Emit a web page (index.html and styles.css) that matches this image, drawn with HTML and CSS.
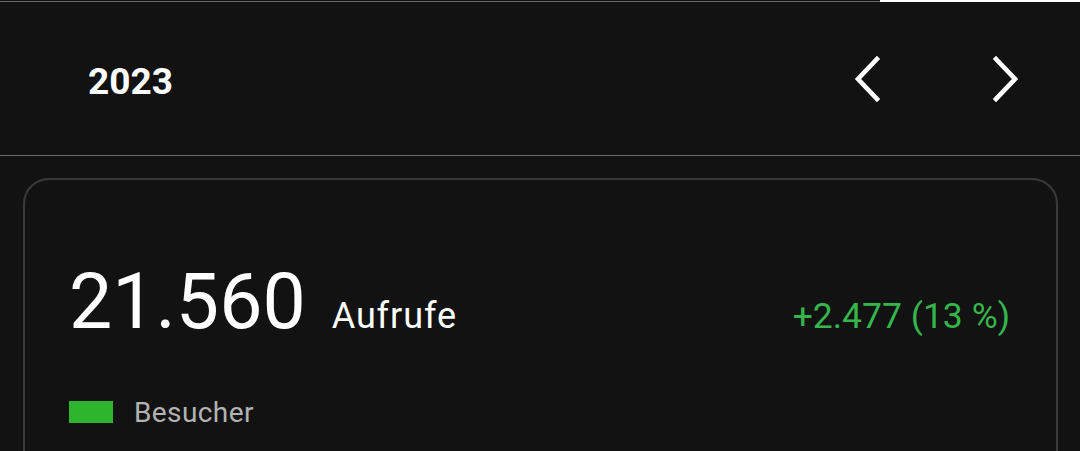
FILE: index.html
```html
<!DOCTYPE html>
<html lang="de">
<head>
<meta charset="utf-8">
<title>Statistik 2023</title>
<link rel="stylesheet" href="styles.css">
</head>
<body>
<div class="topbar">
  <div class="track"></div>
  <div class="indicator"></div>
</div>
<header class="header">
  <div class="year">2023</div>
  <div class="nav">
    <button class="navbtn" aria-label="Zurück">
      <svg width="26" height="46" viewBox="0 0 26 46"><polyline points="23,3 4,23 23,43" fill="none" stroke="#ffffff" stroke-width="4.6" stroke-linecap="square" stroke-linejoin="miter"/></svg>
    </button>
    <button class="navbtn" aria-label="Weiter">
      <svg width="26" height="46" viewBox="0 0 26 46"><polyline points="3,3 22,23 3,43" fill="none" stroke="#ffffff" stroke-width="4.6" stroke-linecap="square" stroke-linejoin="miter"/></svg>
    </button>
  </div>
</header>
<div class="divider"></div>
<section class="card">
  <div class="stat-row">
    <div class="stat-main">
      <span class="stat-value">21.560</span>
      <span class="stat-label">Aufrufe</span>
    </div>
    <span class="stat-delta">+2.477 (13 %)</span>
  </div>
  <div class="legend">
    <span class="legend-swatch"></span>
    <span class="legend-label">Besucher</span>
  </div>
</section>
</body>
</html>
```

FILE: styles.css
```css
html, body {
  margin: 0;
  padding: 0;
  background: #121212;
  height: 100%;
  overflow: hidden;
}
body {
  font-family: Roboto, "Noto Sans", sans-serif;
  color: #ffffff;
}
.topbar {
  display: flex;
  height: 3px;
}
.track {
  flex: 1;
  height: 1px;
  margin-top: 1px;
  background: #666666;
}
.indicator {
  width: 200px;
  height: 2px;
  background: #ffffff;
}
.header {
  height: 152px;
  display: flex;
  align-items: center;
  justify-content: space-between;
  padding: 0 61px 0 88px;
}
.year {
  font-size: 37px;
  font-weight: 700;
  line-height: 1;
  margin-top: 4px;
}
.nav {
  display: flex;
  align-items: center;
  gap: 113px;
}
.navbtn {
  background: none;
  border: 0;
  padding: 0;
  margin: 0;
  width: 26px;
  height: 46px;
  display: block;
}
.navbtn svg {
  display: block;
}
.divider {
  height: 1px;
  background: #6a6a6a;
}
.card {
  margin: 22px 0 0 23px;
  width: 1035px;
  height: 400px;
  border: 2px solid #3a3a3a;
  border-radius: 26px;
  padding: 84px 46px 0 44px;
  box-sizing: border-box;
}
.stat-row {
  display: flex;
  align-items: baseline;
  justify-content: space-between;
}
.stat-main {
  display: flex;
  align-items: baseline;
}
.stat-value {
  font-size: 77px;
  line-height: 77px;
  font-weight: 400;
}
.stat-label {
  font-size: 36px;
  letter-spacing: 0.9px;
  margin-left: 26px;
}
.stat-delta {
  font-size: 35.5px;
  color: #35b64a;
}
.legend {
  display: flex;
  align-items: center;
  height: 30px;
  margin-top: 56px;
}
.legend-swatch {
  width: 44px;
  height: 22px;
  background: #2db52b;
}
.legend-label {
  margin-left: 21px;
  font-size: 28px;
  letter-spacing: 0.4px;
  color: #b3b3b3;
}
```
